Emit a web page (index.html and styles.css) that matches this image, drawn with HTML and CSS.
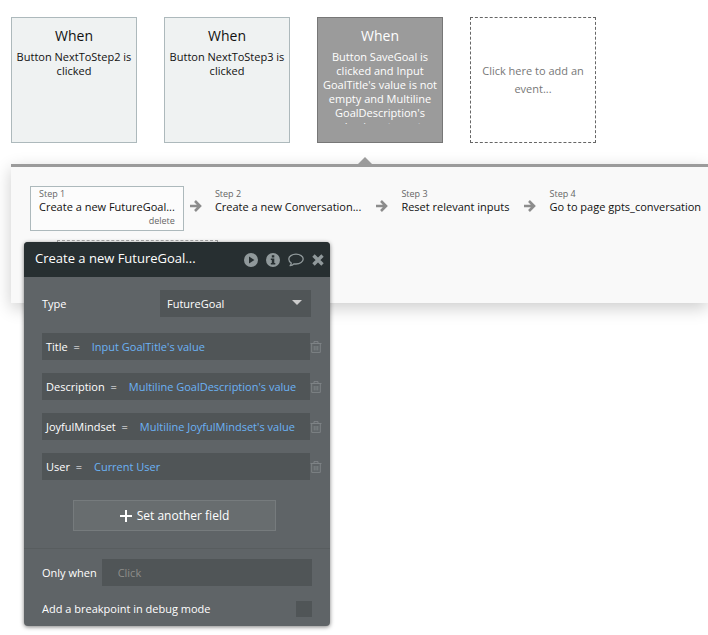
FILE: index.html
```html
<!DOCTYPE html>
<html lang="en">
<head>
    <meta charset="UTF-8">
    <meta name="viewport" content="width=device-width, initial-scale=1.0">
    <title>Workflow</title>
    <link rel="stylesheet" href="styles.css">
</head>
<body>

    <!-- shared icons -->
    <svg class="sprite" aria-hidden="true">
        <symbol id="arrow" viewBox="0 0 12 12">
            <path d="M0 6h9M5 1l5 5-5 5" fill="none" stroke="currentColor" stroke-width="2.6"/>
        </symbol>
        <symbol id="trash" viewBox="0 0 12 12">
            <path d="M0.5 2.5h11M4 2V0.6h4V2M1.7 3v8.4h8.6V3M4.2 5v4.5M6 5v4.5M7.8 5v4.5" fill="none" stroke="currentColor"/>
        </symbol>
    </svg>

    <div class="events">
        <div class="event">
            <h2>When</h2>
            <p>Button NextToStep2 is clicked</p>
        </div>
        <div class="event">
            <h2>When</h2>
            <p>Button NextToStep3 is clicked</p>
        </div>
        <div class="event selected">
            <h2>When</h2>
            <p>Button SaveGoal is clicked and Input GoalTitle's value is not empty and Multiline GoalDescription's value is not empty</p>
        </div>
        <button class="event-new">Click here to add an event...</button>
    </div>

    <div class="actions">
        <div class="steps">
            <div class="step active">
                <span class="step-number">Step 1</span>
                <span class="step-name">Create a new FutureGoal...</span>
                <button class="step-delete">delete</button>
            </div>
            <svg class="arrow"><use href="#arrow"/></svg>
            <div class="step">
                <span class="step-number">Step 2</span>
                <span class="step-name">Create a new Conversation...</span>
            </div>
            <svg class="arrow"><use href="#arrow"/></svg>
            <div class="step">
                <span class="step-number">Step 3</span>
                <span class="step-name">Reset relevant inputs</span>
            </div>
            <svg class="arrow"><use href="#arrow"/></svg>
            <div class="step">
                <span class="step-number">Step 4</span>
                <span class="step-name">Go to page gpts_conversation</span>
            </div>
        </div>
        <div class="action-new"></div>
    </div>

    <div class="editor" role="dialog" aria-labelledby="editorTitle">
        <div class="editor-header">
            <h3 id="editorTitle">Create a new FutureGoal...</h3>
            <button aria-label="Run">
                <svg width="14" height="14" viewBox="0 0 14 14"><path fill="currentColor" fill-rule="evenodd" d="M7 0a7 7 0 1 0 0 14A7 7 0 0 0 7 0zM5 3.6L10.4 7 5 10.4z"/></svg>
            </button>
            <button aria-label="Info">
                <svg width="14" height="14" viewBox="0 0 14 14"><path fill="currentColor" fill-rule="evenodd" d="M7 0a7 7 0 1 0 0 14A7 7 0 0 0 7 0zM5.8 2.2h2.5v2.2H5.8zM4.8 5.5h3.5v4.4h1v1.6H4.8V9.9h1V7.1h-1z"/></svg>
            </button>
            <button aria-label="Comment">
                <svg width="16" height="14" viewBox="0 0 16 14"><path fill="none" stroke="currentColor" stroke-width="1.3" stroke-linejoin="round" d="M8 1.2c4 0 7.2 2.2 7.2 4.9S12 11 8 11c-.7 0-1.3 0-1.9-.2-1 1-2.3 1.7-4 1.9.7-.8 1.1-1.6 1.200-2.700C1.700 9.100.8 7.700.8 6.100.8 3.400 4 1.200 8 1.200z"/></svg>
            </button>
            <button aria-label="Close">
                <svg width="12" height="12" viewBox="0 0 12 12"><path fill="none" stroke="currentColor" stroke-width="3.4" d="M1.5 1.5l9 9M10.5 1.5l-9 9"/></svg>
            </button>
        </div>

        <div class="editor-body">
            <div class="type-row">
                <label for="type">Type</label>
                <div class="select">
                    <select id="type">
                        <option>FutureGoal</option>
                    </select>
                </div>
            </div>

            <div class="field-row">
                <div class="field">
                    <span>Title&nbsp; =</span>
                    <button class="value">Input GoalTitle's value</button>
                </div>
                <button class="trash" aria-label="Delete Title"><svg><use href="#trash"/></svg></button>
            </div>
            <div class="field-row">
                <div class="field">
                    <span>Description&nbsp; =</span>
                    <button class="value">Multiline GoalDescription's value</button>
                </div>
                <button class="trash" aria-label="Delete Description"><svg><use href="#trash"/></svg></button>
            </div>
            <div class="field-row">
                <div class="field">
                    <span>JoyfulMindset&nbsp; =</span>
                    <button class="value">Multiline JoyfulMindset's value</button>
                </div>
                <button class="trash" aria-label="Delete JoyfulMindset"><svg><use href="#trash"/></svg></button>
            </div>
            <div class="field-row">
                <div class="field">
                    <span>User&nbsp; =</span>
                    <button class="value">Current User</button>
                </div>
                <button class="trash" aria-label="Delete User"><svg><use href="#trash"/></svg></button>
            </div>

            <button class="add-field">
                <svg width="12" height="12" viewBox="0 0 12 12"><path fill="none" stroke="currentColor" stroke-width="2" d="M6 0v12M0 6h12"/></svg>
                Set another field
            </button>
        </div>

        <div class="editor-footer">
            <div class="only-when">
                <label for="onlyWhen">Only when</label>
                <input type="text" id="onlyWhen" placeholder="Click">
            </div>
            <div class="breakpoint">
                <label for="breakpoint">Add a breakpoint in debug mode</label>
                <input type="checkbox" id="breakpoint">
            </div>
        </div>
    </div>

</body>
</html>
```

FILE: styles.css
```css
* {
    box-sizing: border-box;
}
body {
    position: relative;
    min-height: 100vh;
    margin: 0;
    font-family: "Open Sans", sans-serif;
    font-size: 11px;
    line-height: 14px;
    background: #fff;
    color: #111;
}
h2, h3, p {
    margin: 0;
    font-weight: normal;
}
button, input, select {
    margin: 0;
    padding: 0;
    border: none;
    background: none;
    font: inherit;
    color: inherit;
}
button {
    cursor: pointer;
}
svg {
    display: block;
}
.sprite {
    position: absolute;
    width: 0;
    height: 0;
}

/* events */
.events {
    display: flex;
    gap: 27px;
    padding: 17px 11px 21px;
}
.event, .event-new {
    flex: none;
    width: 126px;
    height: 126px;
    text-align: center;
}
.event {
    position: relative;
    display: flex;
    flex-direction: column;
    padding: 8px 4px 18px;
    background: #eff2f2;
    border: 1px solid #adb9bc;
}
.event h2 {
    font-size: 14px;
    line-height: 20px;
    margin-bottom: 4px;
}
.event p {
    overflow: hidden;
}
.event.selected {
    background: #9b9b9b;
    border-color: #777;
    color: #fff;
}
.event.selected::after {
    content: "";
    position: absolute;
    top: 139px;
    left: 40px;
    border: 7px solid transparent;
    border-top: none;
    border-bottom-color: #9b9b9b;
}
.event-new {
    padding: 0 10px;
    border: 1px dashed #666;
    line-height: 18px;
    color: #777;
}

/* actions */
.actions {
    height: 139px;
    margin-left: 11px;
    padding: 19px 0 0 19px;
    background: #f9f9f9;
    border-top: 3px solid #9b9b9b;
    box-shadow: 0 5px 16px rgba(0, 0, 0, 0.2);
}
.steps {
    display: flex;
}
.step {
    display: flex;
    flex: none;
    flex-direction: column;
    height: 45px;
    padding: 0 8px;
    border: 1px solid transparent;
}
.step.active {
    border-color: #adb9bc;
    background: #fcfcfc;
}
.step-number, .step-delete {
    font-size: 9px;
    line-height: 13px;
    color: #666;
}
.step-delete {
    align-self: flex-end;
}
.arrow {
    flex: none;
    width: 12px;
    height: 12px;
    margin: 14px 4px 0 6px;
    color: #8c8c8c;
}
.action-new {
    width: 161px;
    height: 45px;
    margin: 9px 0 0 27px;
    border: 1px dashed #aaa;
}

/* property editor */
.editor {
    position: absolute;
    top: 242px;
    left: 24px;
    width: 306px;
    border-radius: 4px;
    background: #5f6467;
    color: #fff;
    box-shadow: 0 1px 4px rgba(0, 0, 0, 0.5);
}
.editor-header {
    display: flex;
    align-items: center;
    gap: 8px;
    height: 35px;
    padding: 0 6px 0 11px;
    border-radius: 4px 4px 0 0;
    background: #272f31;
}
.editor-header h3 {
    flex: 1;
    font-size: 13px;
    line-height: 16px;
    padding-bottom: 3px;
}
.editor-header button {
    color: #90999b;
}
.editor-body {
    display: flex;
    flex-direction: column;
    gap: 13px;
    padding: 13px 8px 17px 18px;
}
.type-row {
    display: flex;
    align-items: center;
    justify-content: space-between;
    padding: 0 11px 3px 0;
}
.select {
    position: relative;
    width: 151px;
}
.select::after {
    content: "";
    position: absolute;
    top: 10px;
    right: 9px;
    border: 5px solid transparent;
    border-top-color: #ccc;
    border-bottom: none;
    pointer-events: none;
}
.select select {
    appearance: none;
    display: block;
    width: 100%;
    height: 27px;
    padding: 0 7px;
    background: #505557;
}
.field-row {
    display: flex;
    align-items: center;
}
.field {
    display: flex;
    align-items: center;
    flex: 1;
    gap: 12px;
    height: 27px;
    padding-left: 4px;
    background: #505557;
}
.value {
    color: #6bb2f5;
}
.trash {
    color: #7e8386;
}
.trash svg {
    width: 12px;
    height: 12px;
}
.add-field {
    display: flex;
    align-items: center;
    justify-content: center;
    gap: 5px;
    height: 31px;
    margin: 7px 46px 0 31px;
    border: 1px solid #767b7d;
    background: #686d6f;
    font-size: 12px;
}
.editor-footer {
    padding: 10px 18px 9px;
    border-top: 1px solid #585d5f;
}
.only-when {
    display: flex;
    align-items: center;
    gap: 5px;
}
.only-when input {
    flex: 1;
    min-width: 0;
    height: 27px;
    padding: 0 16px;
    background: #505557;
}
.only-when input::placeholder {
    color: #8e8e8a;
    opacity: 1;
}
.breakpoint {
    display: flex;
    align-items: center;
    justify-content: space-between;
    margin-top: 15px;
}
.breakpoint input {
    appearance: none;
    width: 16px;
    height: 16px;
    background: #505557;
}
```
